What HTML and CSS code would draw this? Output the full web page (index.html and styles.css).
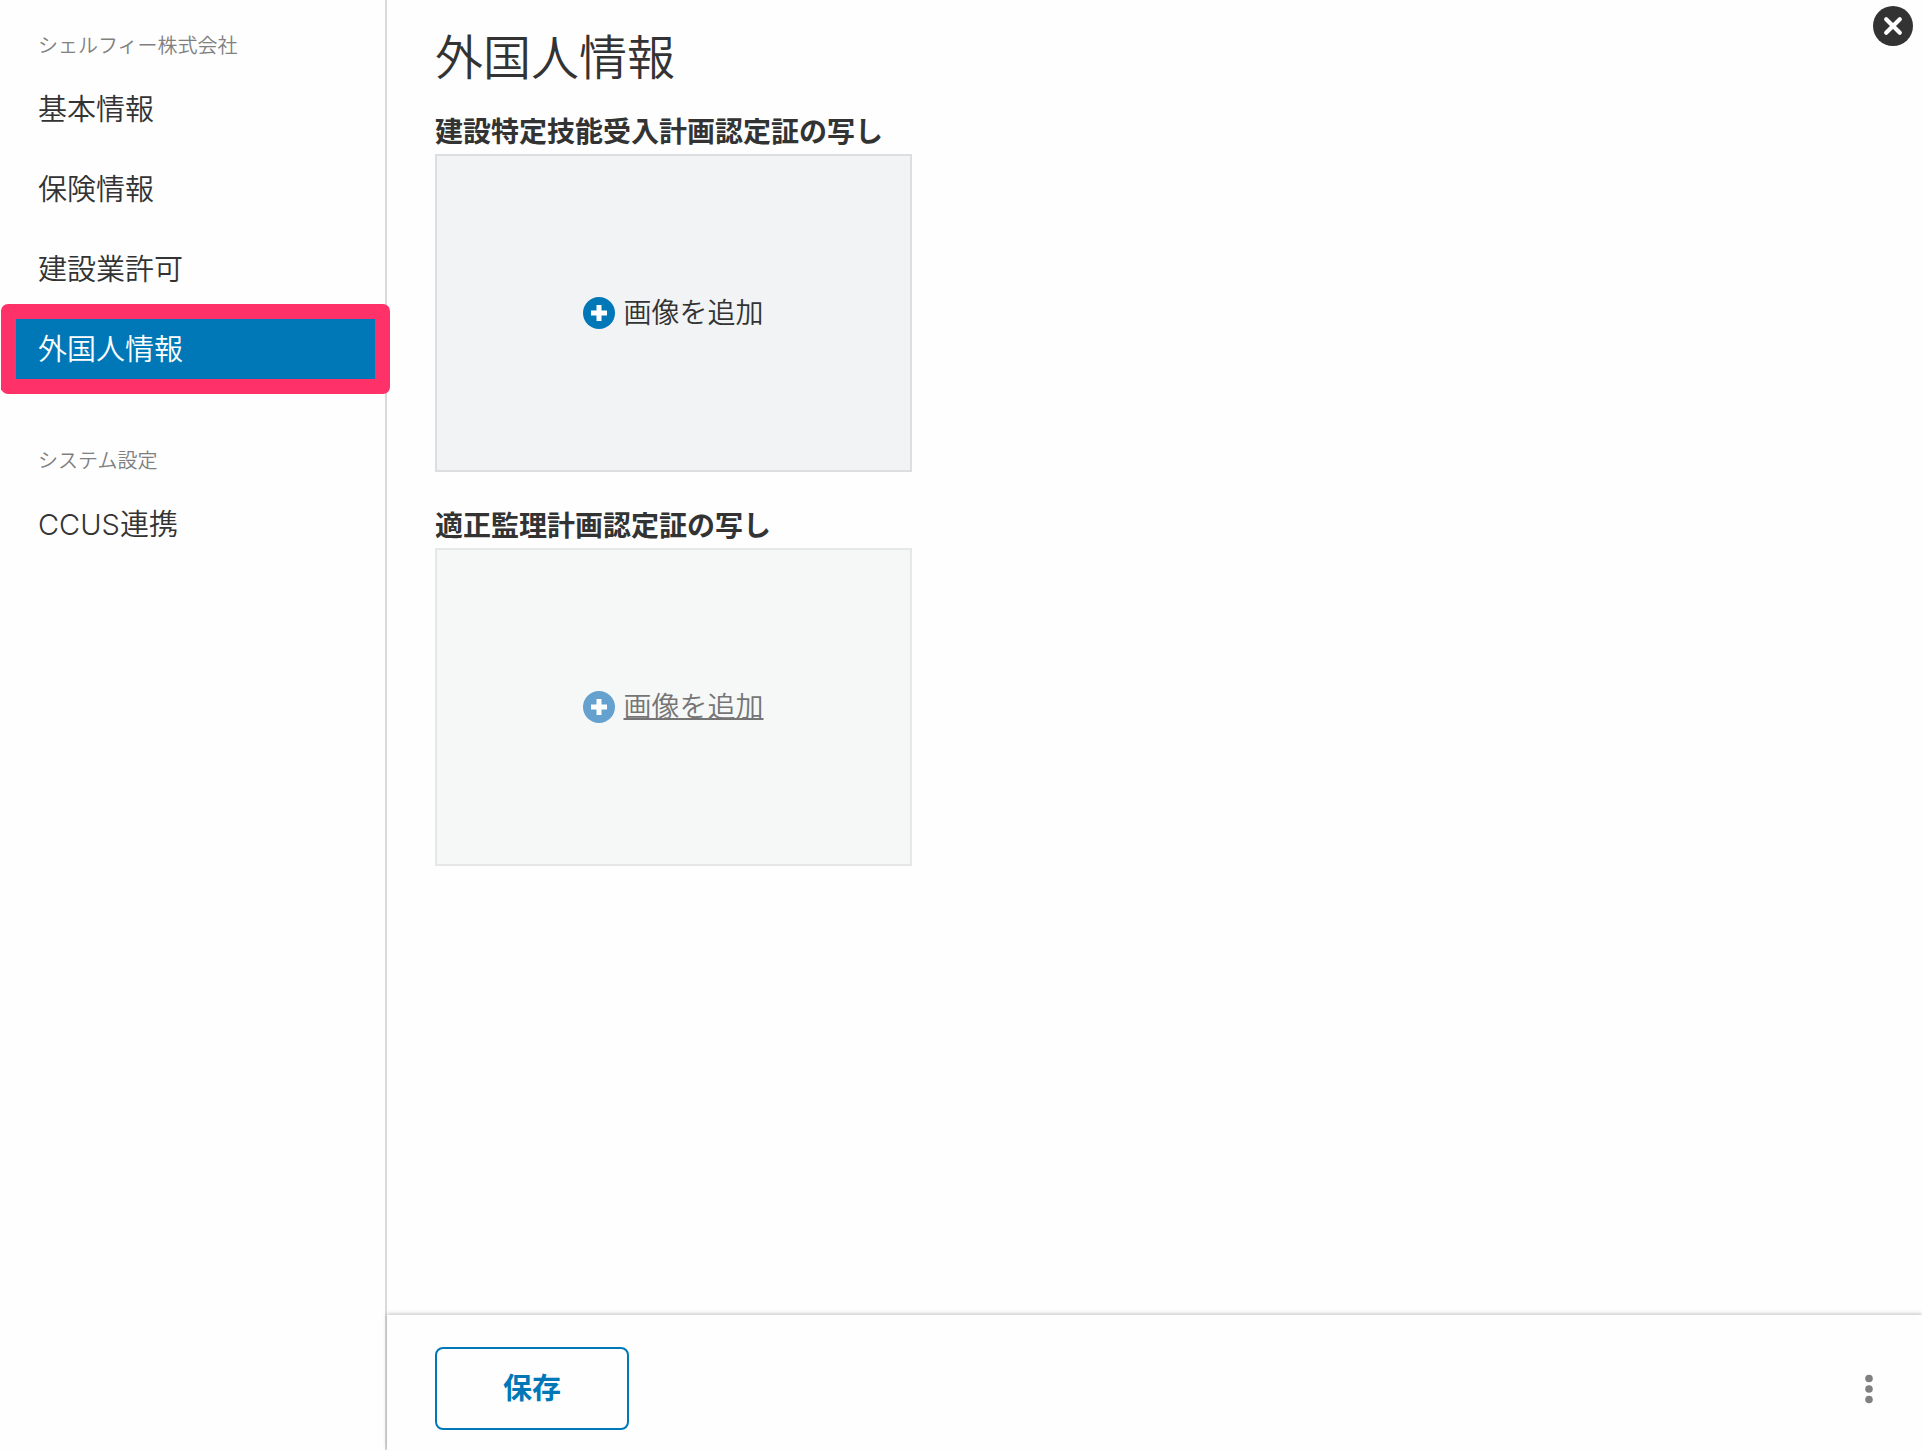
FILE: index.html
```html
<!DOCTYPE html>
<html lang="ja">
<head>
<meta charset="utf-8">
<meta name="viewport" content="width=device-width, initial-scale=1">
<title>外国人情報</title>
<link rel="stylesheet" href="styles.css">
</head>
<body>
<div class="layout">
  <nav class="sidebar">
    <section class="nav-group">
      <h2 class="nav-heading">シェルフィー株式会社</h2>
      <ul class="nav-list">
        <li><a class="nav-link" href="#basic">基本情報</a></li>
        <li><a class="nav-link" href="#insurance">保険情報</a></li>
        <li><a class="nav-link" href="#license">建設業許可</a></li>
        <li><a class="nav-link nav-link-current" href="#foreign" aria-current="page">外国人情報</a></li>
      </ul>
    </section>
    <section class="nav-group">
      <h2 class="nav-heading">システム設定</h2>
      <ul class="nav-list">
        <li><a class="nav-link" href="#ccus">CCUS連携</a></li>
      </ul>
    </section>
  </nav>
  <div class="panel">
    <button class="close" type="button" aria-label="閉じる">
      <svg width="40" height="40" viewBox="0 0 40 40" aria-hidden="true">
        <circle cx="20" cy="20" r="20" fill="#333"/>
        <path d="M13.2 13.2 26.8 26.8M26.8 13.2 13.2 26.8" stroke="#fff" stroke-width="4.2" stroke-linecap="round"/>
      </svg>
    </button>
    <main class="content">
      <h1 class="title">外国人情報</h1>
      <section class="field">
        <h2 class="field-label" id="label-plan">建設特定技能受入計画認定証の写し</h2>
        <button class="upload" type="button" aria-describedby="label-plan">
          <svg width="32" height="32" viewBox="0 0 32 32" aria-hidden="true">
            <circle cx="16" cy="16" r="16" fill="#0078b8"/>
            <path d="M16 8v16M8 16h16" stroke="#fff" stroke-width="5"/>
          </svg>
          <span class="upload-text">画像を追加</span>
        </button>
      </section>
      <section class="field">
        <h2 class="field-label" id="label-audit">適正監理計画認定証の写し</h2>
        <button class="upload upload-active" type="button" aria-describedby="label-audit">
          <svg width="32" height="32" viewBox="0 0 32 32" aria-hidden="true">
            <circle cx="16" cy="16" r="16" fill="#64a1ce"/>
            <path d="M16 8v16M8 16h16" stroke="#fff" stroke-width="5"/>
          </svg>
          <span class="upload-text">画像を追加</span>
        </button>
      </section>
    </main>
    <footer class="actions">
      <button class="save" type="button">保存</button>
      <button class="more" type="button" aria-label="その他">
        <svg width="8" height="30" viewBox="0 0 8 30" aria-hidden="true" fill="#808080">
          <circle cx="4" cy="4.5" r="3.8"/>
          <circle cx="4" cy="15" r="3.8"/>
          <circle cx="4" cy="25.5" r="3.8"/>
        </svg>
      </button>
    </footer>
  </div>
</div>
</body>
</html>
```
FILE: styles.css
```css
* {
  box-sizing: border-box;
}

body {
  margin: 0;
  background: #fefefe;
  color: #333;
  font-family: Inter, "Noto Sans CJK JP", sans-serif;
  font-size: 28px;
  font-weight: 350;
  line-height: 40px;
}

button {
  margin: 0;
  padding: 0;
  border: 0;
  background: none;
  color: inherit;
  font: inherit;
  cursor: pointer;
}

svg {
  display: block;
  flex: none;
}

.layout {
  display: flex;
  min-height: 100vh;
}

.sidebar {
  flex: none;
  display: flex;
  flex-direction: column;
  gap: 55px;
  width: 387px;
  padding-top: 30px;
  border-right: 2px solid #d9d9d9;
}

.nav-heading {
  margin: 0 0 8px;
  padding-left: 38px;
  color: #808080;
  font-size: 20px;
  font-weight: 350;
  line-height: 32px;
}

.nav-list {
  margin: 0;
  padding: 0;
  list-style: none;
}

.nav-link {
  display: block;
  padding: 20px 38px;
  color: inherit;
  font-size: 29px;
  text-decoration: none;
}

.nav-link-current {
  position: relative;
  background: #0078b8;
  color: #fff;
}

/* Highlight frame laid over the current entry */
.nav-link-current::after {
  content: "";
  position: absolute;
  inset: -6px -5px -4px 1px;
  border: 15px solid #ff3169;
  border-radius: 7px;
}

.nav-link-current::before {
  content: "";
  position: absolute;
  inset: 0 auto 0 0;
  width: 1px;
  background: #fefefe;
}

.panel {
  position: relative;
  flex: 1;
  display: flex;
  flex-direction: column;
  min-width: 0;
}

.close {
  position: absolute;
  top: 6px;
  right: 9px;
}

.content {
  flex: 1;
  display: flex;
  flex-direction: column;
  align-items: flex-start;
  padding: 26px 48px 48px;
}

.title {
  margin: 0 0 22px;
  font-size: 48px;
  font-weight: 350;
  line-height: 64px;
}

.field {
  margin-bottom: 34px;
}

.field-label {
  margin: 0 0 2px;
  font-size: 28px;
  font-weight: 700;
  line-height: 40px;
}

.upload {
  display: flex;
  align-items: center;
  justify-content: center;
  gap: 8px;
  width: 477px;
  height: 318px;
  border: 2px solid #dcdedf;
  background: #f1f3f5;
}

.upload-active {
  border-color: #e6e8e8;
  background: #f6f8f7;
  color: #757575;
}

.upload-active .upload-text {
  text-decoration: underline;
  text-decoration-thickness: 2px;
}

.actions {
  display: flex;
  align-items: center;
  justify-content: space-between;
  padding: 32px 49px 20px 48px;
  box-shadow: 0 -1px 4px rgba(0, 0, 0, 0.25);
}

.save {
  width: 194px;
  height: 83px;
  border: 2px solid #0078b8;
  border-radius: 8px;
  color: #0078b8;
  font-size: 29px;
  font-weight: 700;
}
```
